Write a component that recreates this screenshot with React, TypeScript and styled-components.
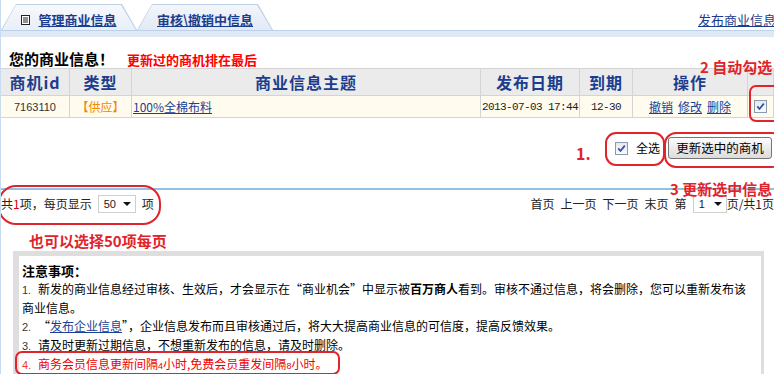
import styled, {createGlobalStyle} from 'styled-components'

const GlobalStyle = createGlobalStyle`
  html, body {
    margin: 0;
    padding: 0;
    overflow: hidden;
    background: #fff;
  }
  body {
    font: 12px/18px "Noto Sans CJK SC", "Liberation Sans", sans-serif;
    color: #000;
  }
`

const RED = '#e0242b'
const NAVY = '#1c3d8e'

const Page = styled.div`
  position: relative;
  width: 774px;
  height: 374px;
  box-sizing: border-box;
  border-left: 1px solid #c9dcef;
  overflow: hidden;
`

const TabBar = styled.div`
  display: flex;
  align-items: flex-end;
  height: 30px;
`

const Tab = styled.div<{$active?: boolean}>`
  position: relative;
  width: 136px;
  height: 26px;
  box-sizing: border-box;
  padding-top: 5px;
  display: flex;
  align-items: center;
  justify-content: center;
  gap: 8px;
  clip-path: polygon(15px 0, 121px 0, 136px 100%, 0 100%);
  background: #bccfe5;

  &::before {
    content: '';
    position: absolute;
    inset: 1px 1px 0 1px;
    clip-path: polygon(14px 0, 119px 0, 134px 100%, 0 100%);
    background: ${p =>
      p.$active
        ? 'linear-gradient(#f7f9fc, #e8eff8)'
        : 'linear-gradient(#f3f6fa, #e2eaf5)'};
  }

  & > * {
    position: relative;
  }
`

const TabLink = styled.a`
  font-size: 13px;
  font-weight: bold;
  color: ${NAVY};
  text-decoration: underline;
  cursor: pointer;
`

const PublishLink = styled.a`
  margin-left: auto;
  align-self: center;
  margin-top: 10px;
  margin-right: -2px;
  font-size: 13px;
  color: ${NAVY};
  text-decoration: underline;
`

const Band = styled.div`
  height: 7px;
  box-sizing: border-box;
  background: #dfe9f6;
  border-top: 1px solid #bcd0e7;
`

const Title = styled.div`
  height: 31px;
  box-sizing: border-box;
  padding: 12px 0 0 8px;
  line-height: 19px;
  display: flex;
  align-items: baseline;
  gap: 13px;

  strong {
    font-size: 15px;
  }

  em {
    font-style: normal;
    font-weight: bold;
    font-size: 13px;
    color: #f00;
  }
`

const Grid = styled.div`
  display: grid;
  grid-template-columns: 69px 62px 349px 99px 53px 115px 26px;
`

const HeadCell = styled.div`
  height: 27px;
  box-sizing: border-box;
  background: #ebebeb;
  border-top: 1px solid #d4d4d4;
  border-right: 1px solid #d4d4d4;
  display: flex;
  align-items: center;
  justify-content: center;
  font-size: 16px;
  font-weight: bold;
  letter-spacing: 1px;
  color: ${NAVY};
`

const Cell = styled.div<{$align?: 'left' | 'center'}>`
  height: 23px;
  box-sizing: border-box;
  background: #fffbee;
  border-top: 1px solid #d4d4d4;
  border-bottom: 1px solid #d4d4d4;
  border-right: 1px solid #d4d4d4;
  display: flex;
  align-items: center;
  justify-content: ${p => (p.$align === 'left' ? 'flex-start' : 'center')};
  padding-left: ${p => (p.$align === 'left' ? '1px' : '0')};
  gap: 5px;
  font-size: 12px;
`

const Num = styled.span`
  font-family: "Liberation Sans", sans-serif;
  font-size: 11px;
  color: #333;
`

const Mono = styled.span`
  font-family: "Liberation Mono", monospace;
  font-size: 11px;
  letter-spacing: -0.6px;
  color: #222;
`

const Kind = styled.span`
  color: #f08a00;
`

const Link = styled.a`
  color: #1a3f96;
  text-decoration: underline;
  cursor: pointer;
`

const CheckBox = styled.span`
  display: inline-flex;
  align-items: center;
  justify-content: center;
  width: 13px;
  height: 13px;
  box-sizing: border-box;
  border: 1px solid #8a9bb0;
  background: linear-gradient(#e6e9ee, #fbfbfc);
`

const Check = () => (
  <CheckBox>
    <svg width="9" height="9" viewBox="0 0 9 9">
      <path d="M1.3 4.4 L3.5 7 L7.8 1.6" stroke="#2f4fa8" strokeWidth="1.7" fill="none" />
    </svg>
  </CheckBox>
)

const ActionRow = styled.div`
  height: 70px;
  box-sizing: border-box;
  padding: 19px 2px 0 0;
  display: flex;
  justify-content: flex-end;
  align-items: flex-start;
  gap: 8px;
`

const SelectAll = styled.label`
  height: 22px;
  display: flex;
  align-items: center;
  gap: 8px;
`

const Button = styled.button`
  width: 104px;
  height: 22px;
  padding: 0;
  border: 1px solid #767676;
  border-radius: 3px;
  background: linear-gradient(#fbfbfb, #dcdcdc);
  font: 12.5px/20px "Noto Sans CJK SC", sans-serif;
  color: #000;
`

const Divider = styled.div`
  height: 2px;
  background: #8ec3e3;
`

const PagerRow = styled.div`
  height: 28px;
  display: flex;
  align-items: center;
  justify-content: space-between;
  color: #222;
`

const Pager = styled.div`
  display: flex;
  align-items: center;
  gap: 6px;

  b {
    font-weight: normal;
    color: #d00;
  }
`

const Select = styled.span<{$w: number}>`
  display: inline-flex;
  align-items: center;
  justify-content: space-between;
  width: ${p => p.$w}px;
  height: 18px;
  box-sizing: border-box;
  padding: 0 4px 0 5px;
  border: 1px solid #cfcfcf;
  background: #fff;
  font-family: "Liberation Sans", sans-serif;
  font-size: 11px;

  &::after {
    content: '';
    border-left: 4px solid transparent;
    border-right: 4px solid transparent;
    border-top: 4px solid #111;
  }
`

const Tip = styled.div`
  margin-top: 14px;
  padding-left: 28px;
  line-height: 18px;
  font-size: 15px;
  font-weight: bold;
  color: ${RED};
`

const Notice = styled.div`
  margin: 1px 10px 0 12px;
  border-style: solid;
  border-color: #dedede;
  border-width: 5px 3px 0 6px;
  padding: 6px 9px 0 3px;
  line-height: 18px;

  h4 {
    margin: 0;
    font-size: 13px;
    font-weight: bold;
  }

  p {
    margin: 0;
    font-size: 12px;
  }
`

const Item = styled.p<{$mark?: boolean}>`
  position: relative;
  color: ${p => (p.$mark ? '#e00' : '#000')};

  &::after {
    content: '';
    display: ${p => (p.$mark ? 'block' : 'none')};
    position: absolute;
    left: -7px;
    top: -4px;
    width: 325px;
    height: 24px;
    box-sizing: border-box;
    border: 2px solid ${RED};
    border-radius: 7px;
  }
`

const ItemNo = styled.span`
  display: inline-block;
  width: 16px;
  font-family: "Liberation Sans", sans-serif;
  font-size: 11px;
  color: inherit;
  opacity: 0.8;
`

const Small = styled.span`
  font-family: "Liberation Sans", sans-serif;
  font-size: 9px;
`

const Mark = styled.div<{$x: number; $y: number; $w: number; $h: number; $r: number}>`
  position: absolute;
  left: ${p => p.$x}px;
  top: ${p => p.$y}px;
  width: ${p => p.$w}px;
  height: ${p => p.$h}px;
  box-sizing: border-box;
  border: 2px solid ${RED};
  border-radius: ${p => p.$r}px;
  pointer-events: none;
`

const Note = styled.div<{$x: number; $y: number; $size: number}>`
  position: absolute;
  left: ${p => p.$x}px;
  top: ${p => p.$y}px;
  font-size: ${p => p.$size}px;
  line-height: 1;
  font-weight: bold;
  color: ${RED};
  white-space: nowrap;
`

const DocIcon = () => (
  <svg width="9" height="10" viewBox="0 0 9 10">
    <rect x="0.5" y="0.5" width="8" height="9" fill="#fff" stroke="#222" />
    <path d="M2 3h5M2 5h5M2 7h5" stroke="#222" strokeWidth="1" />
  </svg>
)

export default function App() {
  return (
    <Page>
      <GlobalStyle />
      <TabBar>
        <Tab $active>
          <DocIcon />
          <TabLink>管理商业信息</TabLink>
        </Tab>
        <Tab>
          <TabLink>审核\撤销中信息</TabLink>
        </Tab>
        <PublishLink>发布商业信息</PublishLink>
      </TabBar>
      <Band />

      <Title>
        <strong>您的商业信息！</strong>
        <em>更新过的商机排在最后</em>
      </Title>

      <Grid>
        <HeadCell>商机id</HeadCell>
        <HeadCell>类型</HeadCell>
        <HeadCell>商业信息主题</HeadCell>
        <HeadCell>发布日期</HeadCell>
        <HeadCell>到期</HeadCell>
        <HeadCell>操作</HeadCell>
        <HeadCell />

        <Cell><Num>7163110</Num></Cell>
        <Cell><Kind>【供应】</Kind></Cell>
        <Cell $align="left"><Link>100%全棉布料</Link></Cell>
        <Cell $align="left"><Mono>2013-07-03 17:44</Mono></Cell>
        <Cell><Mono>12-30</Mono></Cell>
        <Cell>
          <Link>撤销</Link>
          <Link>修改</Link>
          <Link>删除</Link>
        </Cell>
        <Cell><Check /></Cell>
      </Grid>

      <ActionRow>
        <SelectAll>
          <Check />
          全选
        </SelectAll>
        <Button>更新选中的商机</Button>
      </ActionRow>

      <Divider />

      <PagerRow>
        <Pager>
          <span>共<b>1</b>项，每页显示</span>
          <Select $w={38}>50</Select>
          <span>项</span>
        </Pager>
        <Pager>
          <span>首页</span>
          <span>上一页</span>
          <span>下一页</span>
          <span>末页</span>
          <span>第</span>
          <Select $w={34}>1</Select>
          <span style={{marginLeft: -6}}>页/共1页</span>
        </Pager>
      </PagerRow>

      <Tip>也可以选择50项每页</Tip>

      <Notice>
        <h4>注意事项：</h4>
        <Item>
          <ItemNo>1.</ItemNo>新发的商业信息经过审核、生效后，才会显示在“商业机会”中显示被<strong>百万商人</strong>看到。审核不通过信息，将会删除，您可以重新发布该商业信息。
        </Item>
        <Item>
          <ItemNo>2.</ItemNo>“<Link>发布企业信息</Link>”，企业信息发布而且审核通过后，将大大提高商业信息的可信度，提高反馈效果。
        </Item>
        <Item>
          <ItemNo>3.</ItemNo>请及时更新过期信息，不想重新发布的信息，请及时删除。
        </Item>
        <Item $mark>
          <ItemNo>4.</ItemNo>商务会员信息更新间隔<Small>4</Small>小时,免费会员重发间隔<Small>8</Small>小时。
        </Item>
        <Item>
          <ItemNo>5.</ItemNo>已经删除的信息可以在回收站中找回，删除超过30天的信息系统会自动删除，在30天内如需回复信息请联系大华企业网客服。
        </Item>
      </Notice>

      <Note $x={699} $y={59} $size={15}>2 自动勾选</Note>
      <Mark $x={748} $y={85} $w={32} $h={37} $r={7} />
      <Note $x={575} $y={145} $size={16}>1.</Note>
      <Mark $x={604} $y={132} $w={60} $h={34} $r={11} />
      <Mark $x={663} $y={132} $w={120} $h={36} $r={12} />
      <Note $x={669} $y={181} $size={15}>3 更新选中信息</Note>
      <Mark $x={-3} $y={185} $w={163} $h={40} $r={18} />
    </Page>
  )
}
